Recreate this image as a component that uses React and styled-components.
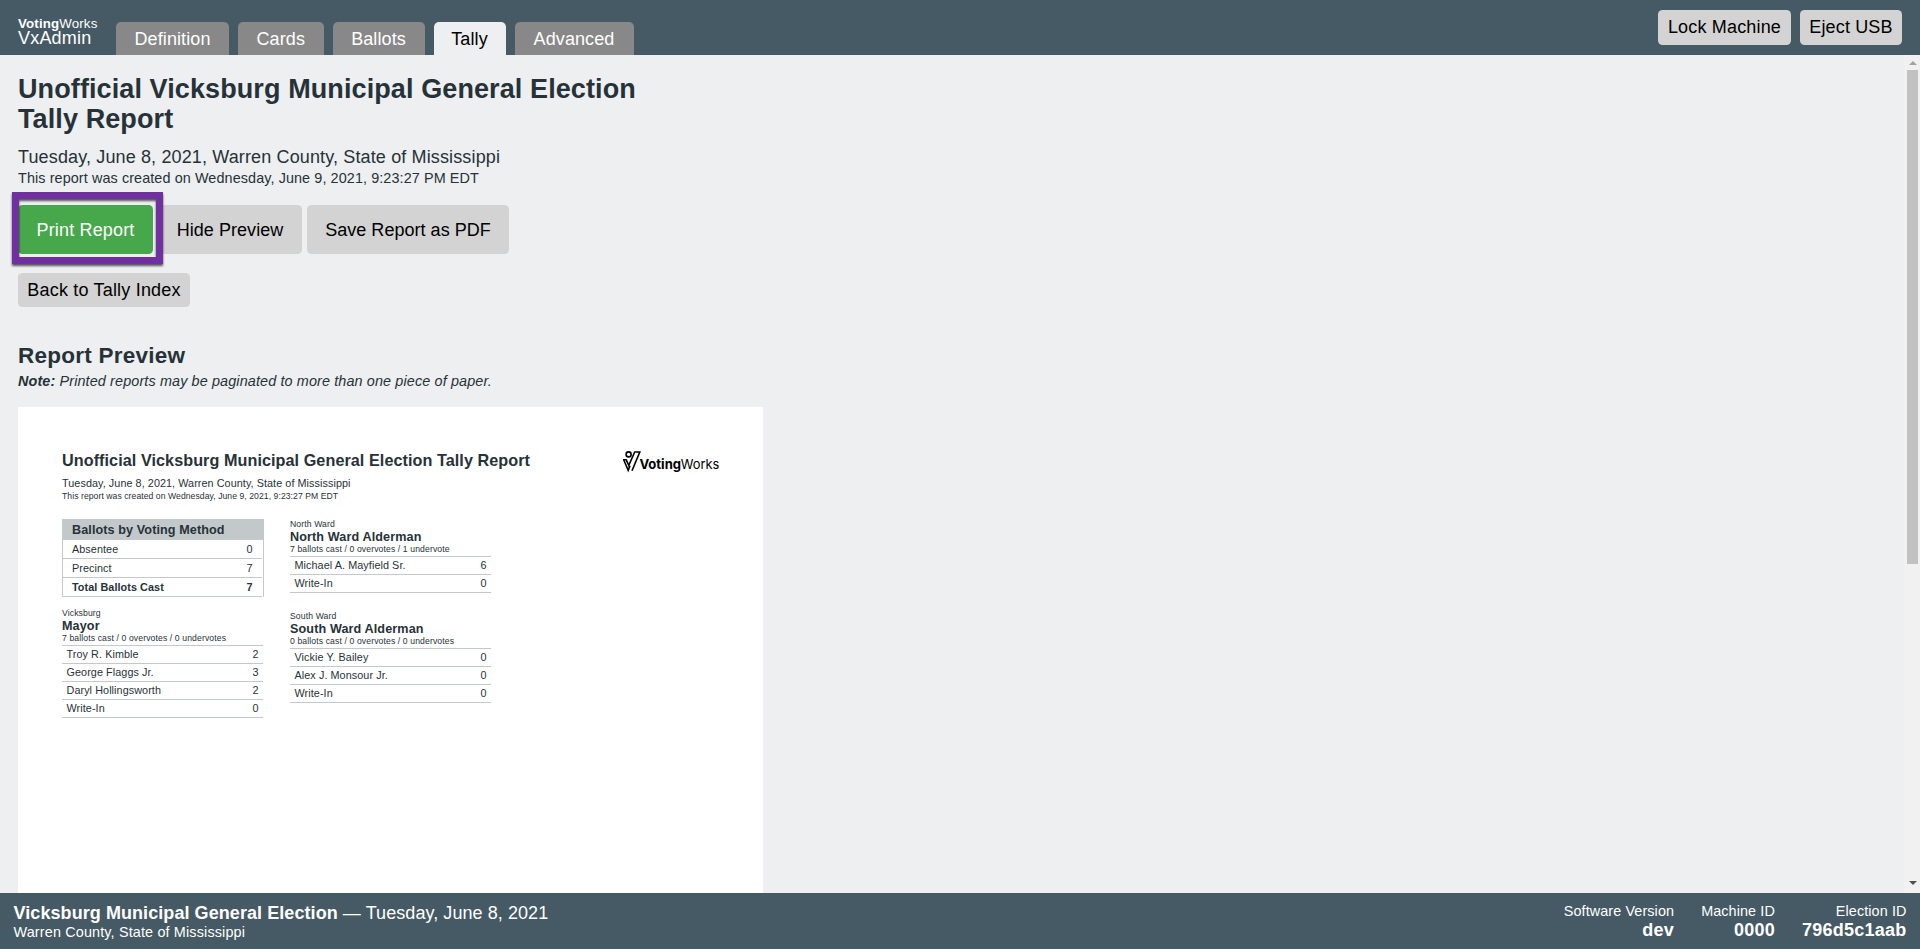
import React from "react";
import styled, { createGlobalStyle, css } from "styled-components";

const GlobalStyle = createGlobalStyle`
  *, *::before, *::after { box-sizing: border-box; }
  html, body { margin: 0; height: 100%; overflow: hidden; }
  body {
    background: #edeff0;
    color: #263238;
    font-family: "Liberation Sans", Arial, sans-serif;
    font-size: 18px;
    line-height: 22px;
    white-space: nowrap;
  }
  h1, h2, h3, p { margin: 0; }
`;

const Screen = styled.div`
  display: flex;
  flex-direction: column;
  height: 949px;
`;

const NavBar = styled.header`
  display: flex;
  flex: none;
  height: 55px;
  padding-left: 18px;
  background: #455a64;
  color: #fff;
`;

const Brand = styled.div`
  width: 98px;
  padding-top: 17px;
`;

const BrandMaker = styled.div`
  font-size: 13.3px;
  line-height: 13px;
  letter-spacing: 0.15px;
`;

const BrandApp = styled.div`
  font-size: 18px;
  line-height: 17px;
  letter-spacing: 0.2px;
`;

const Tabs = styled.nav`
  display: flex;
  flex: 1;
  align-items: flex-end;
  gap: 9px;
`;

const Tab = styled.button`
  width: ${(p) => p.$width}px;
  height: 33px;
  padding: 0;
  border: 0;
  border-radius: 5px 5px 0 0;
  background: ${(p) => (p.$active ? "#edeff0" : "#888")};
  color: ${(p) => (p.$active ? "#000" : "#fff")};
  font: inherit;
  letter-spacing: 0.1px;
`;

const NavActions = styled.div`
  display: flex;
  gap: 9px;
  padding: 10px 18px 0 0;
`;

const Button = styled.button`
  width: ${(p) => p.$width}px;
  height: ${(p) => p.$height || 35}px;
  padding: 0 0 ${(p) => (p.$height ? 0 : 2)}px;
  border: 0;
  border-radius: 4.5px;
  background: ${(p) => (p.$primary ? "#47a74b" : "#d3d3d3")};
  color: ${(p) => (p.$primary ? "#fff" : "#000")};
  font: inherit;
  letter-spacing: ${(p) => p.$spacing || 0}px;
`;

const Body = styled.div`
  display: flex;
  flex: 1;
  min-height: 0;
`;

const Main = styled.main`
  flex: 1;
  min-width: 0;
  overflow: hidden;
  padding: 19px 0 0 18px;
`;

const Title = styled.h1`
  width: 640px;
  margin-bottom: 12px;
  font-size: 27px;
  line-height: 30px;
  letter-spacing: 0.1px;
  white-space: normal;
`;

const ElectionDate = styled.p`
  letter-spacing: 0.135px;
`;

const Created = styled.p`
  font-size: 14.4px;
  line-height: 20px;
  letter-spacing: 0.095px;
`;

const ButtonRow = styled.div`
  display: flex;
  gap: 5px;
  margin: 17px 0 19px;
`;

const Highlighted = styled.div`
  position: relative;
  display: flex;
  &::after {
    content: "";
    position: absolute;
    top: -13px;
    left: -6px;
    width: 151px;
    height: 72px;
    border: 7px solid #7030a0;
    filter: drop-shadow(0 2px 1px rgba(0, 0, 0, 0.65));
  }
`;

const PreviewHeading = styled.h2`
  margin: 36px 0 3px;
  font-size: 22.5px;
  line-height: 25px;
  letter-spacing: 0.25px;
`;

const Note = styled.p`
  margin-bottom: 16px;
  font-size: 14.4px;
  line-height: 20px;
  letter-spacing: 0.125px;
  font-style: italic;
`;

const Paper = styled.article`
  width: 745px;
  height: 600px;
  padding: 43px 43px 44px 44px;
  background: #fff;
`;

const PaperHeader = styled.div`
  display: flex;
  justify-content: space-between;
  height: 69px;
`;

const PaperTitle = styled.h1`
  margin-bottom: 7px;
  font-size: 16.2px;
  line-height: 20px;
  letter-spacing: 0.06px;
`;

const PaperDate = styled.p`
  font-size: 10.8px;
  line-height: 13px;
  letter-spacing: 0.07px;
`;

const PaperCreated = styled.p`
  font-size: 8.64px;
  line-height: 12px;
  letter-spacing: 0.055px;
`;

const Columns = styled.div`
  display: flex;
  gap: 27px;
`;

const Column = styled.div`
  display: flex;
  flex-direction: column;
  width: 201px;
  gap: ${(p) => p.$gap}px;
`;

const MethodTable = styled.section`
  width: 202px;
  border: solid #c3c8cb;
  border-width: 0 1px;
`;

const MethodHead = styled.h3`
  height: 21px;
  padding-left: 9px;
  background: #c3c8cb;
  font-size: 12.6px;
  line-height: 23px;
  letter-spacing: 0.1px;
`;

const row = css`
  display: flex;
  justify-content: space-between;
  border-bottom: 1px solid #c3c8cb;
  font-size: 10.8px;
  letter-spacing: 0.08px;
`;

const MethodRow = styled.div`
  ${row}
  height: 19px;
  margin-right: 1px;
  padding: 0 9.5px 0 9px;
  line-height: 18px;
  font-weight: ${(p) => (p.$total ? 700 : 400)};
`;

const ContestInfo = styled.p`
  font-size: 8.64px;
  line-height: 10px;
  letter-spacing: 0.115px;
`;

const ContestTitle = styled.h3`
  margin-top: 1px;
  font-size: 12.6px;
  line-height: 14px;
  letter-spacing: 0.12px;
`;

const Results = styled.div`
  margin-top: 2px;
  border-top: 1px solid #c3c8cb;
`;

const ResultRow = styled.div`
  ${row}
  height: 18px;
  padding: 0 4.5px;
  line-height: 17px;
`;

const ScrollTrack = styled.div`
  display: flex;
  flex-direction: column;
  align-items: center;
  width: 16px;
  padding: 6px 0 8px 1px;
  background: #f1f1f1;
`;

const ScrollThumb = styled.div`
  width: 11px;
  height: 494px;
  margin: 5px 0 auto;
  background: #c1c1c1;
`;

const StatusBar = styled.footer`
  display: flex;
  flex: none;
  justify-content: space-between;
  height: 56px;
  padding: 9px 13.5px 0;
  background: #455a64;
  color: #fff;
`;

const StatusTitle = styled.div`
  margin-bottom: -1px;
  line-height: 22px;
  letter-spacing: 0.07px;
`;

const StatusDetail = styled.div`
  font-size: 14.4px;
  line-height: 18px;
  letter-spacing: 0.15px;
`;

const StatusGroup = styled.div`
  display: flex;
  gap: 27px;
  text-align: right;
`;

const StatusLabel = styled.div`
  font-size: 14.4px;
  line-height: 18px;
  letter-spacing: 0.1px;
`;

const StatusValue = styled.div`
  font-weight: 700;
  line-height: 20px;
  letter-spacing: 0.25px;
`;

const tabs = [
  ["Definition", 113],
  ["Cards", 85.5],
  ["Ballots", 92],
  ["Tally", 72],
  ["Advanced", 119],
];

const Logo = () => (
  <svg width="97" height="25" viewBox="0 -1 97 25">
    <g fill="none" stroke="#000" strokeWidth="1.6">
      <circle cx="5.6" cy="3.4" r="2.5" />
      <path d="M0 8.8H3.2L5.8 14.4L11.7 1H16.8L9 19.8" />
      <path d="M.8 9L5.2 19.4L7 14.6" />
    </g>
    <g fontFamily="Inter, sans-serif" fontSize="13.4">
      <text x="16.4" y="18" fontWeight="700" textLength="41.6" lengthAdjust="spacingAndGlyphs">Voting</text>
      <text x="57.8" y="18" fontWeight="400" textLength="38.6" lengthAdjust="spacingAndGlyphs">Works</text>
    </g>
  </svg>
);

const Contest = ({ district, title, stats, results }) => (
  <section>
    <ContestInfo>{district}</ContestInfo>
    <ContestTitle>{title}</ContestTitle>
    <ContestInfo>{stats}</ContestInfo>
    <Results>
      {results.map(([name, votes]) => (
        <ResultRow key={name}>
          <span>{name}</span>
          <span>{votes}</span>
        </ResultRow>
      ))}
    </Results>
  </section>
);

const Status = ({ label, value }) => (
  <div>
    <StatusLabel>{label}</StatusLabel>
    <StatusValue>{value}</StatusValue>
  </div>
);

export default function App() {
  return (
    <Screen>
      <GlobalStyle />
      <NavBar>
        <Brand>
          <BrandMaker><b>Voting</b>Works</BrandMaker>
          <BrandApp>VxAdmin</BrandApp>
        </Brand>
        <Tabs>
          {tabs.map(([name, width]) => (
            <Tab key={name} $width={width} $active={name === "Tally"}>{name}</Tab>
          ))}
        </Tabs>
        <NavActions>
          <Button $width={133} $spacing={0.17}>Lock Machine</Button>
          <Button $width={102} $spacing={0.15}>Eject USB</Button>
        </NavActions>
      </NavBar>
      <Body>
        <Main>
          <Title>Unofficial Vicksburg Municipal General Election Tally Report</Title>
          <ElectionDate>Tuesday, June 8, 2021, Warren County, State of Mississippi</ElectionDate>
          <Created>This report was created on Wednesday, June 9, 2021, 9:23:27 PM EDT</Created>
          <ButtonRow>
            <Highlighted>
              <Button $primary $width={135} $height={49} $spacing={0.17}>Print Report</Button>
            </Highlighted>
            <Button $width={144} $height={49} $spacing={0.05}>Hide Preview</Button>
            <Button $width={202} $height={49} $spacing={0.03}>Save Report as PDF</Button>
          </ButtonRow>
          <div>
            <Button $width={172} $height={34} $spacing={0.19}>Back to Tally Index</Button>
          </div>
          <PreviewHeading>Report Preview</PreviewHeading>
          <Note><b>Note:</b> Printed reports may be paginated to more than one piece of paper.</Note>
          <Paper>
            <PaperHeader>
              <div>
                <PaperTitle>Unofficial Vicksburg Municipal General Election Tally Report</PaperTitle>
                <PaperDate>Tuesday, June 8, 2021, Warren County, State of Mississippi</PaperDate>
                <PaperCreated>This report was created on Wednesday, June 9, 2021, 9:23:27 PM EDT</PaperCreated>
              </div>
              <Logo />
            </PaperHeader>
            <Columns>
              <Column $gap={11}>
                <MethodTable>
                  <MethodHead>Ballots by Voting Method</MethodHead>
                  <MethodRow><span>Absentee</span><span>0</span></MethodRow>
                  <MethodRow><span>Precinct</span><span>7</span></MethodRow>
                  <MethodRow $total><span>Total Ballots Cast</span><span>7</span></MethodRow>
                </MethodTable>
                <Contest
                  district="Vicksburg"
                  title="Mayor"
                  stats="7 ballots cast / 0 overvotes / 0 undervotes"
                  results={[["Troy R. Kimble", 2], ["George Flaggs Jr.", 3], ["Daryl Hollingsworth", 2], ["Write-In", 0]]}
                />
              </Column>
              <Column $gap={18}>
                <Contest
                  district="North Ward"
                  title="North Ward Alderman"
                  stats="7 ballots cast / 0 overvotes / 1 undervote"
                  results={[["Michael A. Mayfield Sr.", 6], ["Write-In", 0]]}
                />
                <Contest
                  district="South Ward"
                  title="South Ward Alderman"
                  stats="0 ballots cast / 0 overvotes / 0 undervotes"
                  results={[["Vickie Y. Bailey", 0], ["Alex J. Monsour Jr.", 0], ["Write-In", 0]]}
                />
              </Column>
            </Columns>
          </Paper>
        </Main>
        <ScrollTrack>
          <svg width="8" height="4" viewBox="0 0 8 4"><path d="M0 4L4 0L8 4Z" fill="#a3a3a3" /></svg>
          <ScrollThumb />
          <svg width="8" height="4" viewBox="0 0 8 4"><path d="M0 0H8L4 4Z" fill="#505050" /></svg>
        </ScrollTrack>
      </Body>
      <StatusBar>
        <div>
          <StatusTitle><b>Vicksburg Municipal General Election</b> — Tuesday, June 8, 2021</StatusTitle>
          <StatusDetail>Warren County, State of Mississippi</StatusDetail>
        </div>
        <StatusGroup>
          <Status label="Software Version" value="dev" />
          <Status label="Machine ID" value="0000" />
          <Status label="Election ID" value="796d5c1aab" />
        </StatusGroup>
      </StatusBar>
    </Screen>
  );
}
